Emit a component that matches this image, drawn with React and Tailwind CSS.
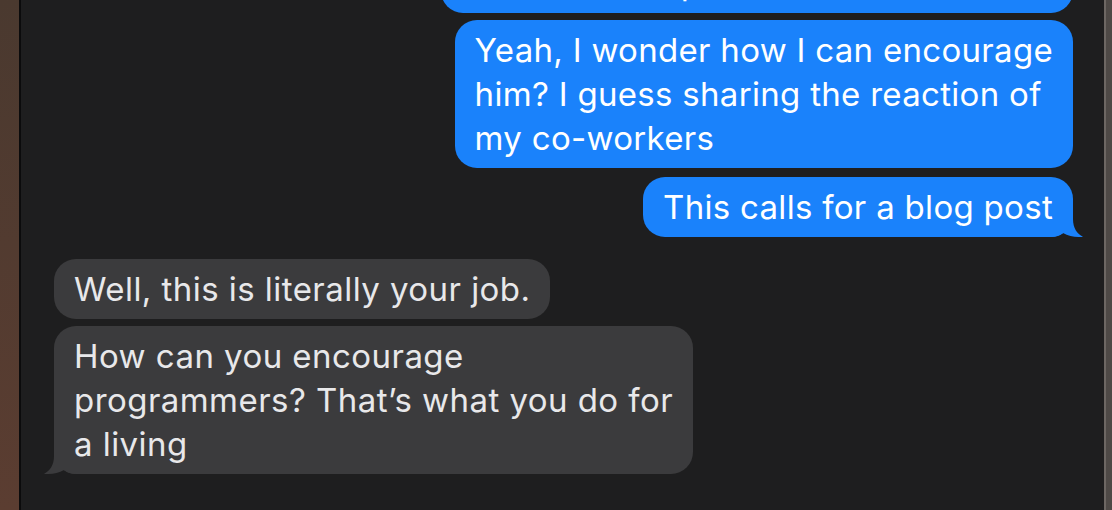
import React from 'react';

const font = { fontFamily: 'Inter, "Noto Sans", "Liberation Sans", sans-serif' };

function Tail({ side, color }) {
  // iMessage-style tail drawn over the bubble's bottom corner
  const cls =
    side === 'right'
      ? 'absolute bottom-0 right-[-10px] w-[32px] h-[26px]'
      : 'absolute bottom-0 left-[-10px] w-[32px] h-[26px] -scale-x-100';
  return (
    <svg className={cls} viewBox="0 0 32 26" fill={color}>
      <path d="M0 0 H22 V8 C22 17 26 23 32 25.8 C26 26.5 18 25.5 12 22 C9 24.5 5 26 0 26 Z" />
    </svg>
  );
}

function Bubble({ from, tail, className = '', children }) {
  const mine = from === 'me';
  return (
    <div className={`flex ${mine ? 'justify-end' : 'justify-start'} ${className}`}>
      <div
        className={`relative rounded-[22px] px-5 py-2 text-[33px] leading-[44px] ${
          mine ? 'bg-[#1a82fb] text-white tracking-[0.3px]' : 'bg-[#3b3b3d] text-[#e8e8ea] tracking-[0.45px]'
        }`}
        style={font}
      >
        <span className="relative z-10">{children}</span>
        {tail && <Tail side={mine ? 'right' : 'left'} color={mine ? '#1a82fb' : '#3b3b3d'} />}
      </div>
    </div>
  );
}

export default function App() {
  return (
    <div className="flex h-[510px] w-full overflow-hidden bg-[#1e1e1f]">
      <div className="w-[19px] shrink-0 bg-gradient-to-b from-[#4a392f] to-[#5b3d31]" />
      <div className="w-[2px] shrink-0 bg-[#0b0b0c]" />

      <div className="flex-1 flex flex-col pl-[33px] pr-[31px]">
        <Bubble from="me" className="mt-[-47px]">
          He should be proud of what he’s built
        </Bubble>
        <Bubble from="me" className="mt-[7px]">
          Yeah, I wonder how I can encourage
          <br />
          him? I guess sharing the reaction of
          <br />
          my co-workers
        </Bubble>
        <Bubble from="me" tail className="mt-[9px]">
          This calls for a blog post
        </Bubble>
        <Bubble from="them" className="mt-[22px]">
          Well, this is literally your job.
        </Bubble>
        <Bubble from="them" tail className="mt-[7px]">
          How can you encourage
          <br />
          programmers? That’s what you do for
          <br />
          a living
        </Bubble>
      </div>

      <div className="w-[2px] shrink-0 bg-[#6d6763]" />
      <div className="w-[6px] shrink-0 bg-[#4e4946]" />
    </div>
  );
}
